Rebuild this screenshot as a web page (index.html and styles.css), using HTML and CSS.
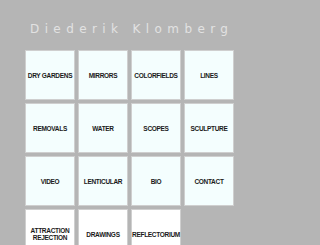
FILE: index.html
```html
<!DOCTYPE html>
<html>
<head>
<meta charset="utf-8">
<link rel="stylesheet" href="styles.css">
</head>
<body>
<div class="page">
  <h1 class="title">Diederik Klomberg</h1>
  <div class="grid">
    <a class="cell">DRY GARDENS</a>
    <a class="cell">MIRRORS</a>
    <a class="cell">COLORFIELDS</a>
    <a class="cell">LINES</a>
    <a class="cell">REMOVALS</a>
    <a class="cell">WATER</a>
    <a class="cell">SCOPES</a>
    <a class="cell">SCULPTURE</a>
    <a class="cell">VIDEO</a>
    <a class="cell">LENTICULAR</a>
    <a class="cell">BIO</a>
    <a class="cell">CONTACT</a>
    <a class="cell white">ATTRACTION<br>REJECTION</a>
    <a class="cell white">DRAWINGS</a>
    <a class="cell white">REFLECTORIUM</a>
  </div>
</div>
</body>
</html>
```
FILE: styles.css
```css
html, body {
  margin: 0;
  padding: 0;
  background: #b5b5b5;
  overflow: hidden;
}
.page {
  padding: 22px 0 0 25px;
}
.title {
  margin: 0 0 14px 5px;
  font-family: "DejaVu Sans", sans-serif;
  font-weight: normal;
  font-size: 12px;
  line-height: 14px;
  letter-spacing: 5.4px;
  color: #e2e2e2;
}
.grid {
  display: grid;
  grid-template-columns: repeat(4, 50px);
  grid-auto-rows: 50px;
  gap: 3px;
}
.cell {
  box-sizing: border-box;
  display: flex;
  align-items: center;
  justify-content: center;
  text-align: center;
  background: #f4fefe;
  border: 1px solid #cfcfcf;
  font-family: "Liberation Sans", Arial, sans-serif;
  font-weight: bold;
  font-size: 6.5px;
  line-height: 7px;
  letter-spacing: -0.3px;
  color: #1a1a1a;
  white-space: nowrap;
}
.white {
  background: #ffffff;
}
```
